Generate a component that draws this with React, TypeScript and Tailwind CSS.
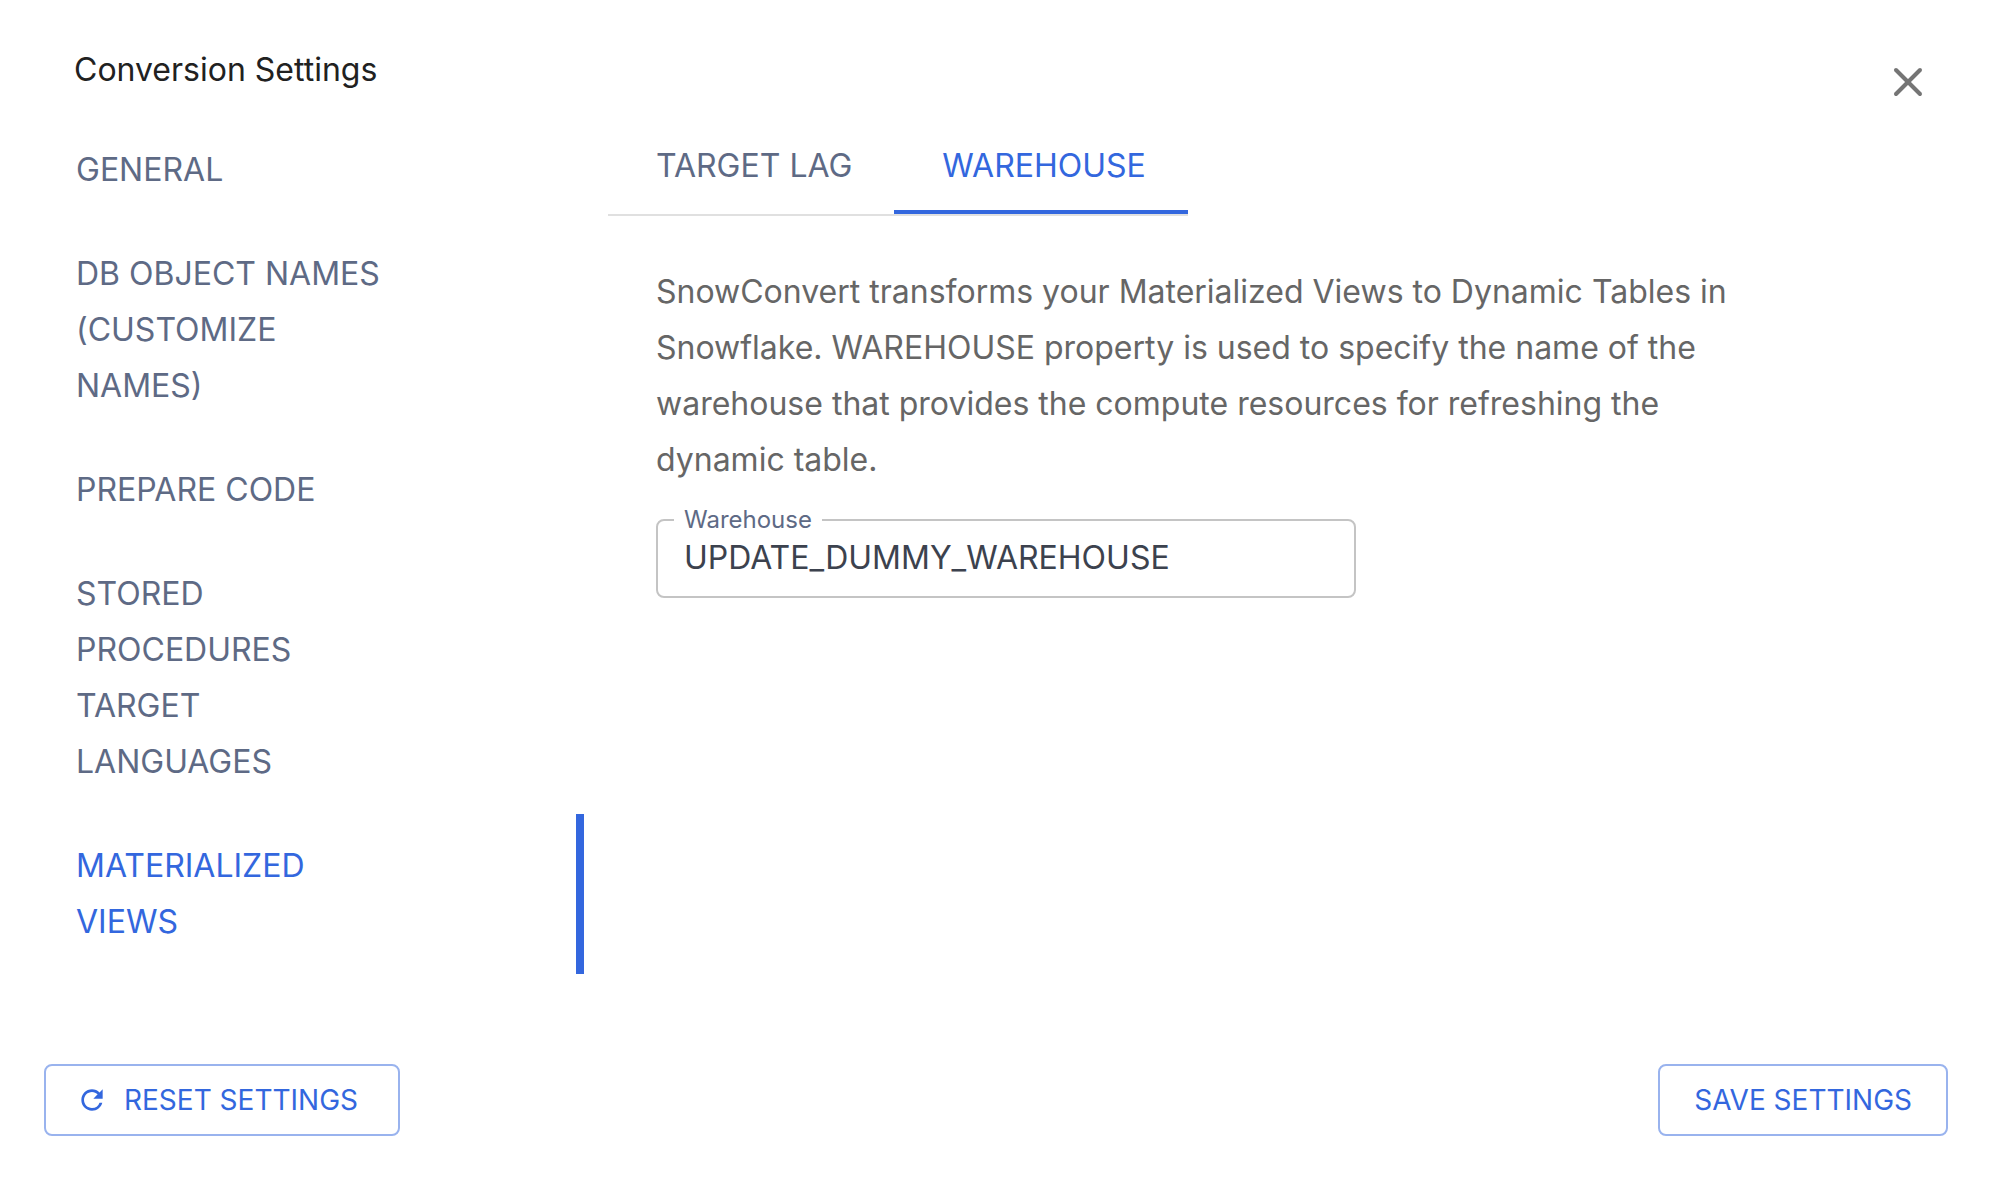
import { useState } from 'react'
import { X } from 'lucide-react'
import { MdRefresh } from 'react-icons/md'

const sections = [
  'General',
  'DB Object Names (Customize Names)',
  'Prepare Code',
  'Stored Procedures Target Languages',
  'Materialized Views',
]

const tabs = ['Target Lag', 'Warehouse']

interface NavProps {
  active: string
  onSelect: (section: string) => void
}

function SettingsNav({ active, onSelect }: NavProps) {
  return (
    <nav className="flex w-[584px] shrink-0 flex-col">
      {sections.map((section) => (
        <button
          key={section}
          type="button"
          onClick={() => onSelect(section)}
          className={`border-r-8 py-6 pl-[76px] text-left uppercase ${
            section === active ? 'border-[#3367de] text-[#3367de]' : 'border-transparent text-[#5e6a85]'
          }`}
        >
          <span className="block max-w-[316px]">{section}</span>
        </button>
      ))}
    </nav>
  )
}

function WarehouseField() {
  const [warehouse, setWarehouse] = useState('UPDATE_DUMMY_WAREHOUSE')

  return (
    <fieldset className="mt-4 w-full max-w-[700px] rounded-lg border-2 border-[#c4c4c4] px-4 pb-4">
      <legend className="px-[10px] text-2xl leading-8 text-[#5e6a85]">
        <label htmlFor="warehouse">Warehouse</label>
      </legend>
      <input
        id="warehouse"
        type="text"
        value={warehouse}
        onChange={(e) => setWarehouse(e.target.value)}
        className="block h-11 w-full px-[10px] text-[#3c424e] outline-none"
      />
    </fieldset>
  )
}

export default function App() {
  const [section, setSection] = useState('Materialized Views')
  const [tab, setTab] = useState('Warehouse')

  return (
    <div className="flex min-h-screen flex-col bg-white font-['Inter',sans-serif] text-[32px] leading-[56px]">
      <header className="flex items-start justify-between pb-3 pl-[74px] pr-[62px] pt-[42px]">
        <h1 className="text-[#212121]">Conversion Settings</h1>
        <button type="button" aria-label="Close" className="mt-4 text-[#757575]">
          <X size={48} />
        </button>
      </header>

      <div className="flex">
        <SettingsNav active={section} onSelect={setSection} />

        <main className="min-w-0 flex-1 pl-6 pr-[200px]">
          <div role="tablist" className="flex w-fit border-b-2 border-[#e0e0e0]">
            {tabs.map((name) => (
              <button
                key={name}
                type="button"
                role="tab"
                aria-selected={name === tab}
                onClick={() => setTab(name)}
                className={`border-b-4 pb-4 pl-12 pr-[42px] pt-5 uppercase ${
                  name === tab ? 'border-[#3367de] text-[#3367de]' : 'border-transparent text-[#5e6a85]'
                }`}
              >
                {name}
              </button>
            ))}
          </div>

          <div className="pl-12 pt-12">
            <p className="text-[#666666]">
              SnowConvert transforms your Materialized Views to Dynamic Tables in Snowflake. WAREHOUSE
              property is used to specify the name of the warehouse that provides the compute resources
              for refreshing the dynamic table.
            </p>
            <WarehouseField />
          </div>
        </main>
      </div>

      <footer className="mt-[90px] flex justify-between pb-[46px] pl-11 pr-[46px] text-[28px] leading-[48px] text-[#3367de]">
        <button
          type="button"
          className="flex items-center gap-4 rounded-lg border-2 border-[#99b3ee] py-[10px] pl-[30px] pr-10 uppercase"
        >
          <MdRefresh size={32} />
          Reset Settings
        </button>
        <button type="button" className="rounded-lg border-2 border-[#99b3ee] px-[34px] py-[10px] uppercase">
          Save Settings
        </button>
      </footer>
    </div>
  )
}
